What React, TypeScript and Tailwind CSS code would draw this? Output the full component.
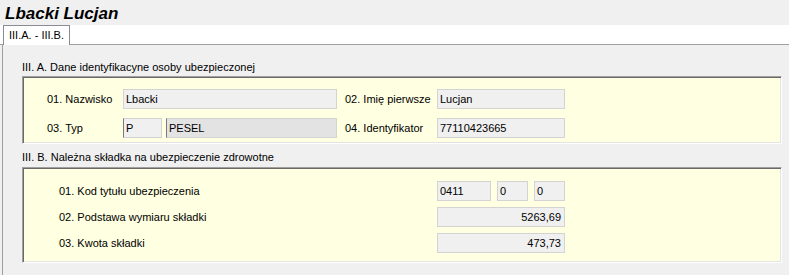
import React from "react";

function Field({
  value,
  w,
  right,
  variant,
}: {
  value: string;
  w: string;
  right?: boolean;
  variant?: "dark" | "darkbg";
}) {
  const base =
    "h-[20px] flex items-center border leading-none whitespace-nowrap overflow-hidden ";
  let cls = "bg-[#f0f0f0] border-[#d3d3d3] ";
  if (variant === "dark") cls = "bg-[#f0f0f0] border-[#d3d3d3] border-l-[#7a7a7a] ";
  if (variant === "darkbg") cls = "bg-[#e3e3e3] border-[#d3d3d3] border-l-[#7a7a7a] ";
  return (
    <div className={base + cls + w + (right ? " justify-end pr-[3px]" : " pl-[2px]")}>
      {value}
    </div>
  );
}

export default function App() {
  const box =
    "w-[760px] bg-[#ffffe1] border border-t-[#a0a0a0] border-l-[#a0a0a0] border-b-white border-r-white shadow-[inset_1px_1px_0_#696969,inset_-1px_-1px_0_#e3e3e3]";
  return (
    <div className="w-[789px] h-[275px] overflow-hidden bg-[#f0f0f0] text-[11px] text-black font-['Liberation_Sans',Arial,sans-serif]">
      <div className="h-[25px] pl-[5px] flex items-center">
        <span className="text-[17px] font-bold italic leading-none pt-[2px]">Lbacki Lucjan</span>
      </div>
      <div className="h-[20px] bg-white border-b border-[#a0a0a0] flex items-end pl-[3px]">
        <div className="h-[20px] w-[67px] -mb-px bg-white border border-b-0 border-[#898c95] flex items-center pl-[5px] leading-none">
          III.A. - III.B.
        </div>
      </div>
      <div className="ml-[2px] h-[230px] border-l border-[#a0a0a0] pl-[19px] pt-[15px]">
        <div className="h-[14px] leading-[14px]">III. A. Dane identyfikacyne osoby ubezpieczonej</div>
        <div className={box + " mt-[2px] pt-[12px] pb-[5px] pl-[24px] flex flex-col gap-[9px]"}>
          <div className="flex items-center">
            <div className="w-[76px]">01. Nazwisko</div>
            <Field value="Lbacki" w="w-[214px]" />
            <div className="w-[92px] ml-[8px]">02. Imię pierwsze</div>
            <Field value="Lucjan" w="w-[128px]" />
          </div>
          <div className="flex items-center">
            <div className="w-[76px]">03. Typ</div>
            <Field value="P" w="w-[39px]" variant="dark" />
            <div className="w-[4px]" />
            <Field value="PESEL" w="w-[171px]" variant="darkbg" />
            <div className="w-[92px] ml-[8px]">04. Identyfikator</div>
            <Field value="77110423665" w="w-[128px]" />
          </div>
        </div>
        <div className="h-[14px] leading-[14px] mt-[6px]">III. B. Należna składka na ubezpieczenie zdrowotne</div>
        <div className={box + " mt-[3px] pt-[13px] pb-[9px] pl-[36px] flex flex-col gap-[6px]"}>
          <div className="flex items-center">
            <div className="w-[378px]">01. Kod tytułu ubezpieczenia</div>
            <Field value="0411" w="w-[54px]" />
            <div className="w-[6px]" />
            <Field value="0" w="w-[31px]" />
            <div className="w-[6px]" />
            <Field value="0" w="w-[31px]" />
          </div>
          <div className="flex items-center">
            <div className="w-[378px]">02. Podstawa wymiaru składki</div>
            <Field value="5263,69" w="w-[128px]" right />
          </div>
          <div className="flex items-center">
            <div className="w-[378px]">03. Kwota składki</div>
            <Field value="473,73" w="w-[128px]" right />
          </div>
        </div>
      </div>
    </div>
  );
}
